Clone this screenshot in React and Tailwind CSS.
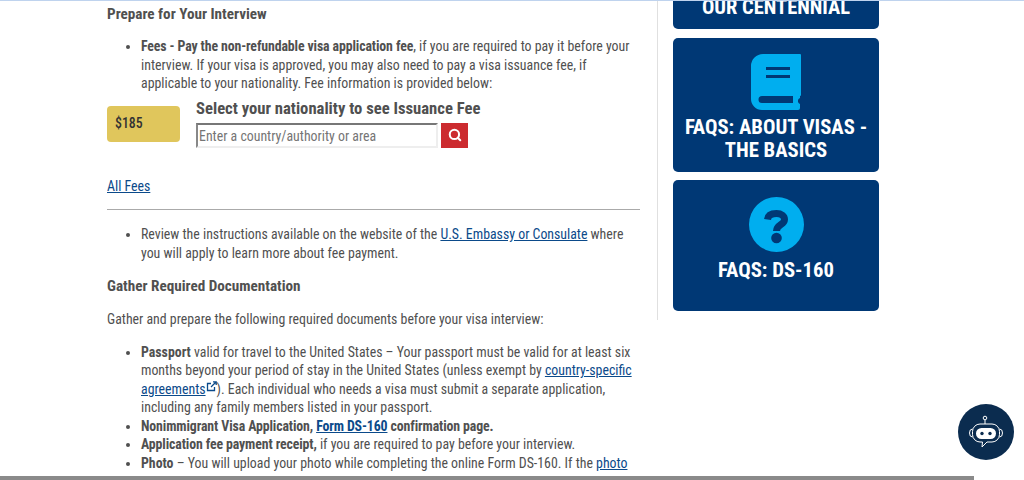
import { Search } from "lucide-react";

function Sidebar() {
  return (
    <aside className="w-[223px] h-[319px] border-l border-[#e0e0e0] pl-[15px] shrink-0 ml-[17px]">
      <div className="w-[206px] h-[28px] bg-[#003875] rounded-b-[5px] overflow-hidden flex items-end justify-center pb-[10px]">
        <span className="text-white font-bold text-[20.5px] leading-[24px]">OUR CENTENNIAL</span>
      </div>

      <div className="w-[206px] h-[134px] mt-[9px] bg-[#003875] rounded-[5px] flex flex-col items-center pt-[16px]">
        <svg width="50" height="56" viewBox="0 0 50 56">
          <path
            fillRule="evenodd"
            fill="#00aeef"
            d="M12 0H49a1 1 0 0 1 1 1V41a1 1 0 0 1-1 1V44a4 4 0 0 0-2 2V48a4 4 0 0 0 2 2V54a2 2 0 0 1-2 2H11A11 11 0 0 1 0 45V12A12 12 0 0 1 12 0ZM15 13V16H39V13ZM15 21V24H39V21ZM11 42a3.500 3.500 0 0 0 0 7H42V42Z"
          />
        </svg>
        <p className="text-white font-bold text-[20.7px] leading-[23px] text-center mt-[6px]">
          FAQS: ABOUT VISAS -<br />THE BASICS
        </p>
      </div>

      <div className="w-[206px] h-[131px] mt-[8px] bg-[#003875] rounded-[5px] flex flex-col items-center pt-[17px]">
        <svg width="55" height="55" viewBox="0 0 55 55">
          <circle cx="27.5" cy="27.5" r="27.5" fill="#00aeef" />
          <path d="M18.500 22.500C19 18 22.500 16.500 27.500 16.500S35.500 19 35.500 22.500C35.500 28 27.500 27.500 27.500 34" fill="none" stroke="#003875" strokeWidth="7" />
          <circle cx="27.500" cy="41" r="5.300" fill="#003875" />
        </svg>
        <p className="text-white font-bold text-[20.7px] leading-[23px] text-center mt-[7px]">FAQS: DS-160</p>
      </div>
    </aside>
  );
}

function ChatBot() {
  return (
    <div className="fixed right-[10px] bottom-[20px] w-[56px] h-[56px] rounded-full bg-[#0b2c4f] flex items-center justify-center">
      <svg width="40" height="40" viewBox="0 0 40 40" fill="none" stroke="white" strokeWidth="1">
        <circle cx="19" cy="6" r="1.800" />
        <path d="M19 8v4" />
        <path d="M14 12H26a7.500 7.500 0 0 1 7.500 7.500v3a7.500 7.500 0 0 1-7.500 7.500H21l-5 5 .5-5H14a7.500 7.500 0 0 1-7.500-7.500v-3a7.500 7.500 0 0 1 7.500-7.500Z" />
        <path d="M6.500 17a3 4 0 0 0 0 8M33.500 17a3 4 0 0 1 0 8" />
        <rect x="10" y="16" width="20" height="11" rx="5.500" fill="white" stroke="none" />
        <circle cx="16" cy="21.500" r="1.700" fill="#0b2c4f" stroke="none" />
        <circle cx="24" cy="21.500" r="1.700" fill="#0b2c4f" stroke="none" />
      </svg>
    </div>
  );
}

export default function App() {
  const link = "text-[#0b4a8a] underline";
  const bold = "font-bold tracking-[-0.12px]";
  return (
    <div className="relative w-[1024px] h-[480px] overflow-hidden bg-white font-['Roboto',sans-serif] [font-stretch:75%] text-[#505050] text-[13.85px] leading-[18.5px] border-t border-[#bfd3ee]">
      <div className="flex pl-[107px]">
        <main className="w-[533px] shrink-0">
          <h3 className="font-bold text-[15.2px] leading-[20px] mt-[3px]">Prepare for Your Interview</h3>

          <ul className="list-disc pl-[34px] mt-[13px]">
            <li>
              <b className={bold}>Fees - Pay the non-refundable visa application fee</b>, if you are required to pay it before your
              interview. If your visa is approved, you may also need to pay a visa issuance fee, if applicable to your
              nationality. Fee information is provided below:
            </li>
          </ul>

          <div className="flex mt-[5px]">
            <div className="w-[73px] h-[36px] mt-[8px] bg-[#e0c65c] rounded-[4px] flex items-center pl-[8px] font-medium text-[#333]">$185</div>
            <div className="ml-[16px]">
              <p className="font-bold text-[16.65px] leading-[22px]">Select your nationality to see Issuance Fee</p>
              <div className="flex mt-[3px]">
                <input
                  placeholder="Enter a country/authority or area"
                  className="w-[242px] h-[25px] border-2 border-t-[#777] border-l-[#888] border-r-[#eee] border-b-[#eee] pl-[1px] pt-[2px] placeholder:text-[#757575] outline-none"
                />
                <div className="w-[27px] h-[25px] ml-[3px] bg-[#cc2b2f] flex items-center justify-center">
                  <Search size={14} color="white" strokeWidth={3.5} />
                </div>
              </div>
            </div>
          </div>

          <p className="mt-[29px]"><a className={link}>All Fees</a></p>
          <hr className="border-[#aaa] mt-[14px]" />

          <ul className="list-disc pl-[34px] mt-[15px]">
            <li>
              Review the instructions available on the website of the <a className={link}>U.S. Embassy or Consulate</a> where
              you will apply to learn more about fee payment.
            </li>
          </ul>

          <h3 className="font-bold text-[15.2px] leading-[20px] mt-[14px]">Gather Required Documentation</h3>
          <p className="mt-[14px]">Gather and prepare the following required documents before your visa interview:</p>

          <ul className="list-disc pl-[34px] mt-[14px]">
            <li>
              <b className="font-bold">Passport</b> valid for travel to the United States – Your passport must be valid for at least six months
              beyond your period of stay in the United States (unless exempt by{" "}
              <a className={link}>country-specific agreements</a>
              <svg className="inline-block align-top mt-[1px]" width="11" height="11" viewBox="0 0 11 11" fill="none" stroke="#0b4a8a" strokeWidth="1.300">
                <path d="M5 2.500H1.500V9.500H8.500V6M5 6l5-5M7 .8h3.200V4" />
              </svg>
              ). Each individual who needs a visa must submit a separate application, including any family members listed
              in your passport.
            </li>
            <li>
              <b className={bold}>Nonimmigrant Visa Application, <a className={link}>Form DS-160</a> confirmation page.</b>
            </li>
            <li><b className={bold}>Application fee payment receipt,</b> if you are required to pay before your interview.</li>
            <li>
              <b className="font-bold">Photo</b> – You will upload your photo while completing the online Form DS-160. If the{" "}
              <a className={link}>photo</a>
            </li>
          </ul>
        </main>
        <Sidebar />
      </div>

      <ChatBot />
      <div className="absolute left-0 bottom-0 h-[4px] w-[974px] bg-[#8a8a8a]" />
    </div>
  );
}
